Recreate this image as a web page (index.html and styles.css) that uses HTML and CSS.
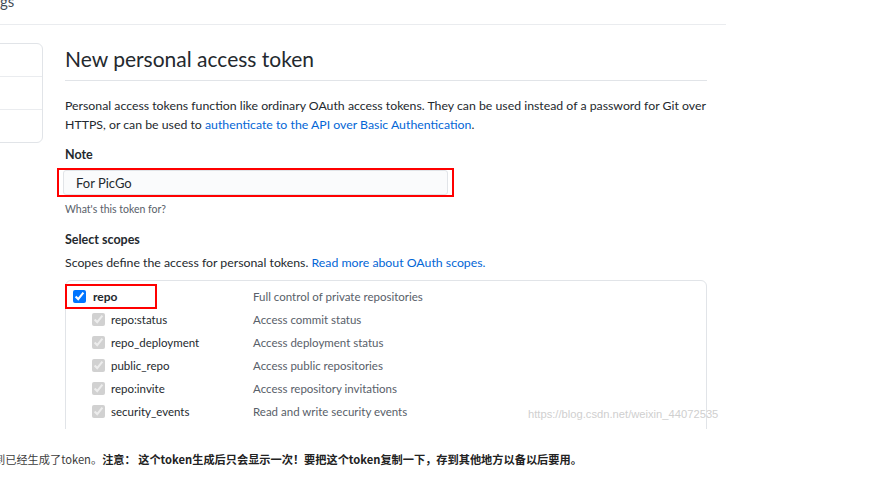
FILE: index.html
```html
<!DOCTYPE html>
<html lang="en">
<head>
<meta charset="utf-8">
<title>New personal access token</title>
<link rel="stylesheet" href="styles.css">
</head>
<body>
<div class="shot">
  <div class="crumb"><span class="crumb-text">gs</span></div>
  <div class="layout">
    <aside class="side">
      <div class="side-item"></div>
      <div class="side-item"></div>
      <div class="side-item"></div>
    </aside>
    <main class="content">
      <h2 class="title">New personal access token</h2>
      <p class="lead">Personal access tokens function like ordinary OAuth access tokens. They can be used instead of a password for Git over HTTPS, or can be used to <a class="link" href="#">authenticate to the API over Basic Authentication</a>.</p>
      <div class="label">Note</div>
      <div class="mark-input"><input class="input" type="text" value="For PicGo"></div>
      <div class="help">What's this token for?</div>
      <div class="label label-scopes">Select scopes</div>
      <p class="scopes-note">Scopes define the access for personal tokens. <a class="link" href="#">Read more about OAuth scopes.</a></p>
      <div class="scopes">
        <div class="row row-main">
          <label class="name mark-repo"><input class="check" type="checkbox" checked><span class="name-text">repo</span></label>
          <span class="desc">Full control of private repositories</span>
        </div>
        <div class="row">
          <label class="name sub"><input class="check" type="checkbox" checked disabled><span class="name-text">repo:status</span></label>
          <span class="desc">Access commit status</span>
        </div>
        <div class="row">
          <label class="name sub"><input class="check" type="checkbox" checked disabled><span class="name-text">repo_deployment</span></label>
          <span class="desc">Access deployment status</span>
        </div>
        <div class="row">
          <label class="name sub"><input class="check" type="checkbox" checked disabled><span class="name-text">public_repo</span></label>
          <span class="desc">Access public repositories</span>
        </div>
        <div class="row">
          <label class="name sub"><input class="check" type="checkbox" checked disabled><span class="name-text">repo:invite</span></label>
          <span class="desc">Access repository invitations</span>
        </div>
        <div class="row">
          <label class="name sub"><input class="check" type="checkbox" checked disabled><span class="name-text">security_events</span></label>
          <span class="desc">Read and write security events</span>
        </div>
        <div class="row"></div>
      </div>
    </main>
  </div>
  <div class="watermark">https://blog.csdn.net/weixin_44072535</div>
</div>
<p class="caption">到已经生成了token。<strong class="strong">注意： 这个token生成后只会显示一次！要把这个token复制一下，存到其他地方以备以后要用。</strong></p>
</body>
</html>
```

FILE: styles.css
```css
html, body {
  margin: 0;
  padding: 0;
  background: #ffffff;
}

body {
  font-family: "Lato", "Noto Sans", sans-serif;
  color: #24292e;
  overflow: hidden;
}

.shot {
  position: relative;
  width: 726px;
  height: 429px;
  overflow: hidden;
}

.crumb {
  display: flow-root;
  height: 24px;
  border-bottom: 1px solid #eaecef;
}

.crumb-text {
  display: block;
  margin-top: -9px;
  font-size: 15px;
  line-height: 20px;
  color: #444d56;
}

.layout {
  display: flex;
  align-items: flex-start;
}

.side {
  flex: none;
  width: 198px;
  margin-left: -157px;
  margin-top: 18px;
  border: 1px solid #e1e4e8;
  border-radius: 6px;
}

.side-item {
  height: 32px;
}

.side-item + .side-item {
  border-top: 1px solid #eaecef;
}

.content {
  flex: none;
  width: 642px;
  margin-left: 22px;
}

.title {
  margin: 22px 0 0;
  padding-bottom: 9px;
  border-bottom: 1px solid #e1e4e8;
  font-size: 21px;
  line-height: 24px;
  font-weight: 400;
}

.lead {
  margin: 15px 0 0;
  font-size: 12.3px;
  line-height: 19px;
}

.link {
  color: #0366d6;
  text-decoration: none;
}

.label {
  margin-top: 12px;
  font-size: 12.5px;
  line-height: 18px;
  font-weight: 700;
}

.mark-input {
  display: flex;
  width: fit-content;
  margin: 4px 0 0 -8px;
  padding: 0 4px;
  border: 2px solid #ff0000;
}

.input {
  box-sizing: border-box;
  width: 385px;
  height: 25px;
  margin: 0;
  padding: 0 12px;
  border: 1px solid #e1e4e8;
  border-radius: 3px;
  background: #fafbfc;
  font-family: "Lato", "Noto Sans", sans-serif;
  font-size: 13px;
  color: #24292e;
  outline: none;
}

.help {
  margin-top: 4px;
  font-size: 10.5px;
  line-height: 16px;
  color: #586069;
}

.label-scopes {
  margin-top: 14px;
}

.scopes-note {
  margin: 4px 0 0;
  font-size: 12.3px;
  line-height: 19px;
}

.scopes {
  margin-top: 8px;
  padding-top: 3px;
  height: 300px;
  border: 1px solid #e1e4e8;
  border-radius: 6px;
}

.row {
  display: flex;
  align-items: center;
  height: 23px;
  font-size: 11.5px;
}

.row-main {
  height: 24px;
}

.name {
  flex: none;
  display: flex;
  align-items: center;
  width: 187px;
  box-sizing: border-box;
}

.mark-repo {
  width: 92px;
  height: 25px;
  margin-left: -1px;
  margin-right: 96px;
  padding-left: 6px;
  border: 2px solid #ff0000;
  font-weight: 700;
  font-size: 12px;
}

.mark-repo .name-text {
  margin-left: 7px;
}

.sub {
  padding-left: 26px;
}

.sub .name-text {
  margin-left: 6px;
}

.check {
  width: 13px;
  height: 13px;
  margin: 0;
}

.desc {
  color: #586069;
}

.watermark {
  position: absolute;
  left: 528px;
  top: 406px;
  font-family: "Liberation Sans", Arial, sans-serif;
  font-size: 11.2px;
  line-height: 16px;
  color: #cfcfcf;
  white-space: nowrap;
}

.caption {
  margin: 21px 0 0 -6px;
  font-family: "Noto Sans CJK SC", "Liberation Sans", sans-serif;
  font-size: 11.2px;
  line-height: 18px;
  color: #3d3d3d;
  white-space: nowrap;
}

.strong {
  font-weight: 700;
  color: #222222;
}
```
